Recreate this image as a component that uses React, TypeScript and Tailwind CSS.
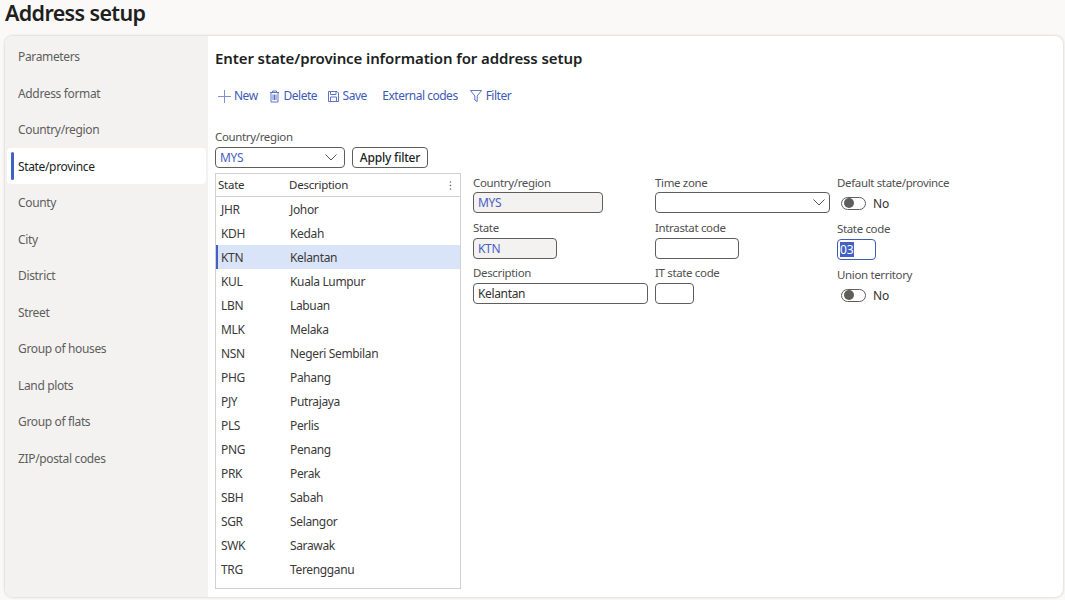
import React from "react";

const nav = ["Parameters","Address format","Country/region","State/province","County","City","District","Street","Group of houses","Land plots","Group of flats","ZIP/postal codes"];
const rows = [["JHR","Johor"],["KDH","Kedah"],["KTN","Kelantan"],["KUL","Kuala Lumpur"],["LBN","Labuan"],["MLK","Melaka"],["NSN","Negeri Sembilan"],["PHG","Pahang"],["PJY","Putrajaya"],["PLS","Perlis"],["PNG","Penang"],["PRK","Perak"],["SBH","Sabah"],["SGR","Selangor"],["SWK","Sarawak"],["TRG","Terengganu"]];

const Chevron = () => (
  <svg width="12" height="7" viewBox="0 0 12 7" fill="none" stroke="#555" strokeWidth="1"><path d="M0.5 0.5L6 6L11.5 0.5" /></svg>
);

const Label = ({ children }: { children: React.ReactNode }) => (
  <div className="text-[11.5px] leading-[16px] text-[#505050] tracking-[-0.35px]">{children}</div>
);

const Box = ({ w, ro, children }: { w: string; ro?: boolean; children?: React.ReactNode }) => (
  <div className={`${w} h-[21px] mt-[1px] rounded-[4px] border border-[#605e5c] flex items-center justify-between px-[4px] text-[12px] tracking-[-0.35px] ${ro ? "bg-[#f3f2f1] text-[#4a5fc1]" : "bg-white text-[#323130]"}`}>{children}</div>
);

const Toggle = () => (
  <div className="flex items-center gap-[7px] ml-[4px] h-[20px] mt-[2px] text-[12px] text-[#323130]">
    <div className="w-[25px] h-[13px] rounded-full border border-[#605e5c] bg-white flex items-center pl-[2px]">
      <div className="w-[10px] h-[10px] rounded-full bg-[#605e5c]" />
    </div>
    <span className="pt-[2px]">No</span>
  </div>
);

export default function App() {
  return (
    <div className="w-[1065px] h-[600px] overflow-hidden bg-[#faf9f8] flex flex-col text-[#323130]" style={{ fontFamily: '"Noto Sans", sans-serif' }}>
      <h1 className="h-[36px] pl-[5px] text-[21.5px] leading-[26px] font-semibold text-[#201f1e] tracking-[-0.65px]">Address setup</h1>
      <div className="ml-[5px] w-[1058px] h-[561px] rounded-[8px] overflow-hidden flex bg-white shadow-[0_0_3px_rgba(0,0,0,0.22)]">
        <aside className="w-[203px] shrink-0 bg-[#f3f2f1] px-[2px] pt-[2px]">
          {nav.map((n) => {
            const sel = n === "State/province";
            return (
              <div key={n} className={`h-[36.5px] flex items-center pl-[11px] pt-[2px] text-[12px] tracking-[-0.35px] relative rounded-[4px] ${sel ? "bg-white text-[#201f1e]" : "text-[#605e5c]"}`}>
                {sel && <span className="absolute left-[4px] top-[4px] bottom-[4px] w-[3px] rounded-[2px] bg-[#4361c4]" />}
                {n}
              </div>
            );
          })}
        </aside>
        <main className="flex-1 pl-[7px] flex flex-col">
          <h2 className="mt-[12px] h-[20px] text-[15px] leading-[20px] font-semibold text-[#201f1e] tracking-[-0.1px]">Enter state/province information for address setup</h2>
          <div className="mt-[18px] h-[20px] flex items-center text-[12px] tracking-[-0.5px] text-[#3f5bb5]">
            <span className="flex items-center gap-[3px] ml-[3px]">
              <svg width="13" height="13" viewBox="0 0 13 13" stroke="#7f8fd0" strokeWidth="1"><path d="M6.5 0V13M0 6.5H13" /></svg>New
            </span>
            <span className="flex items-center gap-[4px] ml-[11px]">
              <svg width="11" height="13" viewBox="0 0 11 13" fill="none" stroke="#5f74c4" strokeWidth="1"><path d="M1 2.5H10M3.5 2.5V1H7.5V2.5M2 2.5V12H9V2.5M4 4.5V10M5.5 4.5V10M7 4.5V10" /></svg>Delete
            </span>
            <span className="flex items-center gap-[4px] ml-[10.5px]">
              <svg width="11" height="11" viewBox="0 0 11 11" fill="none" stroke="#5f74c4" strokeWidth="1"><path d="M0.5 0.5H9L10.5 2V10.5H0.5ZM2.5 0.5V3.5H8V0.5M2.5 10.5V6H8.5V10.5" /></svg>Save
            </span>
            <span className="ml-[15.5px]">External codes</span>
            <span className="flex items-center gap-[4px] ml-[12px]">
              <svg width="12" height="12" viewBox="0 0 12 12" fill="none" stroke="#5f74c4" strokeWidth="1"><path d="M0.5 0.5H11.5L7.2 6V11.5L4.8 10V6Z" /></svg>Filter
            </span>
          </div>
          <div className="mt-[23px]"><Label>Country/region</Label></div>
          <div className="flex gap-[7px] mt-[1px]">
            <div className="w-[130px] h-[21px] mt-[1px] rounded-[4px] border border-[#605e5c] flex items-center justify-between pl-[4px] pr-[7px] text-[12px] tracking-[-0.35px] text-[#4a5fc1]"><span>MYS</span><Chevron /></div>
            <div className="w-[76px] h-[21px] mt-[1px] rounded-[4px] border border-[#605e5c] flex items-center justify-center text-[12px] font-medium text-[#201f1e] tracking-[-0.2px]">Apply filter</div>
          </div>
          <div className="flex mt-[5px] items-start">
            <div className="w-[246px] h-[416px] border border-[#d2d0ce] bg-white">
              <div className="h-[23px] border-b border-[#d2d0ce] flex items-center text-[11.5px] text-[#323130] relative tracking-[-0.25px]">
                <span className="w-[73px] pl-[2px]">State</span>
                <span>Description</span>
                <svg className="absolute right-[8px] top-[7px]" width="3" height="9" viewBox="0 0 3 9" fill="#666"><circle cx="1.5" cy="1" r="0.8" /><circle cx="1.5" cy="4.5" r="0.8" /><circle cx="1.5" cy="8" r="0.8" /></svg>
              </div>
              <div>
                {rows.map(([c, d]) => {
                  const sel = c === "KTN";
                  return (
                    <div key={c} className={`h-[24px] flex items-center pt-[2px] text-[12px] tracking-[-0.35px] text-[#3b3a39] relative ${sel ? "bg-[#d9e4f8]" : ""}`}>
                      {sel && <span className="absolute left-0 top-0 bottom-0 w-[2px] bg-[#4361c4]" />}
                      <span className="w-[69px] pl-[5px] shrink-0">{c}</span>
                      <span className="pl-[5px]">{d}</span>
                    </div>
                  );
                })}
              </div>
            </div>
            <div className="ml-[12px] w-[175px] shrink-0 pt-[2px]">
              <Label>Country/region</Label>
              <Box w="w-[130px]" ro>MYS</Box>
              <div className="mt-[7px]"><Label>State</Label></div>
              <div className="pt-[1px]"><Box w="w-[84px]" ro>KTN</Box></div>
              <div className="mt-[6px]"><Label>Description</Label></div>
              <div className="pt-[1px]"><Box w="w-[175px]">Kelantan</Box></div>
            </div>
            <div className="ml-[7px] w-[175px] shrink-0 pt-[2px]">
              <Label>Time zone</Label>
              <Box w="w-[175px]"><span /><Chevron /></Box>
              <div className="mt-[7px]"><Label>Intrastat code</Label></div>
              <div className="pt-[1px]"><Box w="w-[84px]" /></div>
              <div className="mt-[6px]"><Label>IT state code</Label></div>
              <div className="pt-[1px]"><Box w="w-[39px]" /></div>
            </div>
            <div className="ml-[7px] w-[180px] shrink-0 pt-[2px]">
              <Label>Default state/province</Label>
              <Toggle />
              <div className="mt-[8px]"><Label>State code</Label></div>
              <div className="w-[39px] h-[21px] mt-[2px] rounded-[4px] border border-[#3f5bb5] flex items-center px-[2px] text-[12px]"><span className="bg-[#4361c4] text-white leading-[15px]">03</span></div>
              <div className="mt-[7px]"><Label>Union territory</Label></div>
              <Toggle />
            </div>
          </div>
        </main>
      </div>
    </div>
  );
}
